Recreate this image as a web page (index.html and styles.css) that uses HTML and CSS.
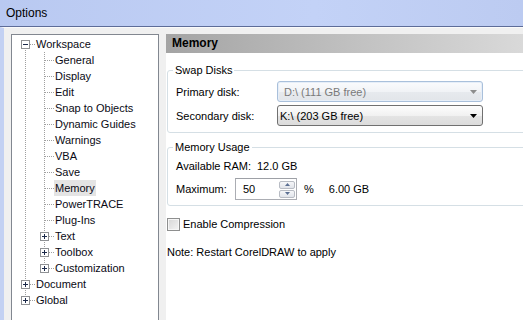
FILE: index.html
```html
<!DOCTYPE html>
<html lang="en">
<head>
    <meta charset="UTF-8">
    <title>Options</title>
    <link rel="stylesheet" href="styles.css">
</head>
<body>
    <div class="window">
        <div class="titlebar">Options</div>

        <div class="body">
            <!-- category tree -->
            <div class="tree">
                <div class="row">
                    <span class="node first"><svg class="exp" viewBox="0 0 9 9"><rect x=".5" y=".5" width="8" height="8"/><path d="M2 4.5h5"/></svg></span>
                    <span class="label">Workspace</span>
                </div>
                <div class="row"><span class="guide"></span><span class="node"></span><span class="label">General</span></div>
                <div class="row"><span class="guide"></span><span class="node"></span><span class="label">Display</span></div>
                <div class="row"><span class="guide"></span><span class="node"></span><span class="label">Edit</span></div>
                <div class="row"><span class="guide"></span><span class="node"></span><span class="label">Snap to Objects</span></div>
                <div class="row"><span class="guide"></span><span class="node"></span><span class="label">Dynamic Guides</span></div>
                <div class="row"><span class="guide"></span><span class="node"></span><span class="label">Warnings</span></div>
                <div class="row"><span class="guide"></span><span class="node"></span><span class="label">VBA</span></div>
                <div class="row"><span class="guide"></span><span class="node"></span><span class="label">Save</span></div>
                <div class="row"><span class="guide"></span><span class="node"></span><span class="label selected">Memory</span></div>
                <div class="row"><span class="guide"></span><span class="node"></span><span class="label">PowerTRACE</span></div>
                <div class="row"><span class="guide"></span><span class="node"></span><span class="label">Plug-Ins</span></div>
                <div class="row">
                    <span class="guide"></span>
                    <span class="node"><svg class="exp" viewBox="0 0 9 9"><rect x=".5" y=".5" width="8" height="8"/><path d="M2 4.5h5M4.5 2v5"/></svg></span>
                    <span class="label">Text</span>
                </div>
                <div class="row">
                    <span class="guide"></span>
                    <span class="node"><svg class="exp" viewBox="0 0 9 9"><rect x=".5" y=".5" width="8" height="8"/><path d="M2 4.5h5M4.5 2v5"/></svg></span>
                    <span class="label">Toolbox</span>
                </div>
                <div class="row">
                    <span class="guide"></span>
                    <span class="node last"><svg class="exp" viewBox="0 0 9 9"><rect x=".5" y=".5" width="8" height="8"/><path d="M2 4.5h5M4.5 2v5"/></svg></span>
                    <span class="label">Customization</span>
                </div>
                <div class="row">
                    <span class="node"><svg class="exp" viewBox="0 0 9 9"><rect x=".5" y=".5" width="8" height="8"/><path d="M2 4.5h5M4.5 2v5"/></svg></span>
                    <span class="label">Document</span>
                </div>
                <div class="row">
                    <span class="node last"><svg class="exp" viewBox="0 0 9 9"><rect x=".5" y=".5" width="8" height="8"/><path d="M2 4.5h5M4.5 2v5"/></svg></span>
                    <span class="label">Global</span>
                </div>
            </div>

            <!-- settings page -->
            <div class="panel">
                <div class="panel-header">Memory</div>

                <fieldset class="group">
                    <legend>Swap Disks</legend>
                    <div class="disk-grid">
                        <span class="field-label">Primary disk:</span>
                        <div class="combo disabled">
                            <span>D:\ (111 GB free)</span>
                            <svg class="arrow" viewBox="0 0 7 4"><path d="M0 0h7L3.5 4z"/></svg>
                        </div>
                        <span class="field-label">Secondary disk:</span>
                        <div class="combo">
                            <span>K:\ (203 GB free)</span>
                            <svg class="arrow" viewBox="0 0 7 4"><path d="M0 0h7L3.5 4z"/></svg>
                        </div>
                    </div>
                </fieldset>

                <fieldset class="group usage">
                    <legend>Memory Usage</legend>
                    <div class="usage-row">
                        <span class="ram-label">Available RAM:</span>
                        <span>12.0 GB</span>
                    </div>
                    <div class="usage-row max-row">
                        <span class="max-label">Maximum:</span>
                        <div class="spin">
                            <span class="spin-value">50</span>
                            <div class="spin-buttons">
                                <span class="spin-btn"><svg viewBox="0 0 5 3"><path d="M0 3h5L2.5 0z"/></svg></span>
                                <span class="spin-btn"><svg viewBox="0 0 5 3"><path d="M0 0h5L2.5 3z"/></svg></span>
                            </div>
                        </div>
                        <span class="percent">%</span>
                        <span class="max-gb">6.00 GB</span>
                    </div>
                </fieldset>

                <div class="check-row">
                    <span class="checkbox"></span>
                    <span>Enable Compression</span>
                </div>

                <p class="note">Note: Restart CorelDRAW to apply</p>
            </div>
        </div>
    </div>
</body>
</html>
```

FILE: styles.css
```css
body {
    margin: 0;
    font-family: "Liberation Sans", Arial, sans-serif;
    font-size: 11px;
    color: #000;
    background-color: #f0f0f0;
}
.window {
    width: 523px;
    height: 320px;
    display: flex;
    flex-direction: column;
    overflow: hidden;
}
.titlebar {
    height: 26px;
    line-height: 26px;
    padding-left: 6px;
    font-size: 12px;
    background: linear-gradient(to right, #b9c9f1, #c3d2f7 60%, #bccbf1);
    border-bottom: 1px solid #5d6c98;
    flex-shrink: 0;
}
.body {
    flex: 1;
    display: flex;
    border-left: 4px solid #c3d1f3;
    border-top: 1px solid #fafafa;
    padding: 6px 0 0 7px;
    min-height: 0;
}

/* tree */
.tree {
    width: 148px;
    box-sizing: border-box;
    margin-right: 7px;
    padding-top: 1px;
    border: 1px solid #828790;
    border-bottom: none;
    background-color: #fff;
    flex-shrink: 0;
}
.row {
    display: flex;
    height: 16px;
    align-items: center;
}
.guide {
    width: 19px;
    height: 16px;
    flex-shrink: 0;
    background: repeating-linear-gradient(to bottom, #a0a0a0 0 1px, transparent 1px 2px) 13px 0 / 1px 16px no-repeat;
}
.node {
    width: 23px;
    height: 16px;
    flex-shrink: 0;
    box-sizing: border-box;
    padding-left: 9px;
    display: flex;
    align-items: center;
    background-image:
        repeating-linear-gradient(to right, #a0a0a0 0 1px, transparent 1px 2px),
        repeating-linear-gradient(to bottom, #a0a0a0 0 1px, transparent 1px 2px);
    background-repeat: no-repeat;
    background-position: 14px 8px, 13px 0;
    background-size: 9px 1px, 1px 16px;
}
.node.first {
    background-position: 14px 8px, 13px 8px;
    background-size: 9px 1px, 1px 8px;
}
.node.last {
    background-size: 9px 1px, 1px 8px;
}
.exp {
    width: 9px;
    height: 9px;
    display: block;
}
.exp rect {
    fill: #fff;
    stroke: #8f9194;
}
.exp path {
    stroke: #1c2a4a;
}
.label {
    padding: 0 1px;
    line-height: 16px;
    white-space: nowrap;
    color: #0a0a14;
}
.label.selected {
    background-color: #e4e4e4;
}

/* right side */
.panel {
    flex: 1;
    background-color: #fff;
    overflow: hidden;
}
.panel-header {
    height: 19px;
    line-height: 19px;
    padding-left: 6px;
    font-size: 12px;
    font-weight: bold;
    background: linear-gradient(to right, #a4a4a4, #c2c2c2 55%, #d9d9d9);
}
.group {
    margin: 11px -20px 0 1px;
    padding: 4px 8px 6px 8px;
    border: 1px solid #d5dfe5;
    border-radius: 3px;
}
.group legend {
    padding: 0 2px;
    margin-left: -3px;
    line-height: 13px;
}
.disk-grid {
    display: grid;
    grid-template-columns: 101px 206px;
    row-gap: 3px;
    align-items: center;
}
.combo {
    height: 21px;
    box-sizing: border-box;
    border: 1px solid #707070;
    border-radius: 3px;
    display: flex;
    align-items: center;
    justify-content: space-between;
    padding: 0 5px 0 2px;
    background: linear-gradient(#fdfdfd, #f1f1f1 50%, #e4e4e4 51%, #dcdcdc);
}
.combo.disabled {
    border-color: #a9c0db;
    padding-left: 6px;
    color: #7a7a7a;
    background: linear-gradient(#fafbfd, #f1f3f6 50%, #e7eaee 51%, #e2e5e9);
    box-shadow: inset 0 0 0 1px #e6eef8;
}
.arrow {
    width: 7px;
    height: 4px;
    fill: #000;
}
.combo.disabled .arrow {
    fill: #8d8d8d;
}
.usage {
    margin-top: 8px;
    padding-bottom: 5px;
}
.usage-row {
    display: flex;
    align-items: center;
    height: 16px;
}
.max-row {
    height: 22px;
    margin-top: 4px;
}
.ram-label {
    width: 81px;
}
.max-label {
    width: 59px;
}
.spin {
    width: 62px;
    height: 22px;
    box-sizing: border-box;
    border: 1px solid #abadb3;
    border-top-color: #9da0a6;
    display: flex;
    align-items: center;
    justify-content: space-between;
    padding: 0 1px 0 7px;
}
.spin-buttons {
    display: flex;
    flex-direction: column;
    gap: 1px;
}
.spin-btn {
    width: 16px;
    height: 8px;
    box-sizing: border-box;
    border: 1px solid #b8bcc4;
    border-radius: 2px;
    display: flex;
    align-items: center;
    justify-content: center;
    background: linear-gradient(#f6f7f9, #e1e4ea);
}
.spin-btn svg {
    width: 5px;
    height: 3px;
    fill: #5b6f93;
}
.percent {
    margin-left: 7px;
}
.max-gb {
    margin-left: 15px;
}
.check-row {
    display: flex;
    align-items: center;
    height: 16px;
    margin-top: 10px;
    margin-left: 1px;
}
.checkbox {
    width: 13px;
    height: 13px;
    box-sizing: border-box;
    border: 1px solid #8e8f8f;
    margin-right: 3px;
    background: linear-gradient(135deg, #d6d6d6, #f4f4f4);
    box-shadow: inset 0 0 0 1px #f6f6f6;
}
.note {
    margin: 12px 0 0 1px;
    line-height: 16px;
}
```
